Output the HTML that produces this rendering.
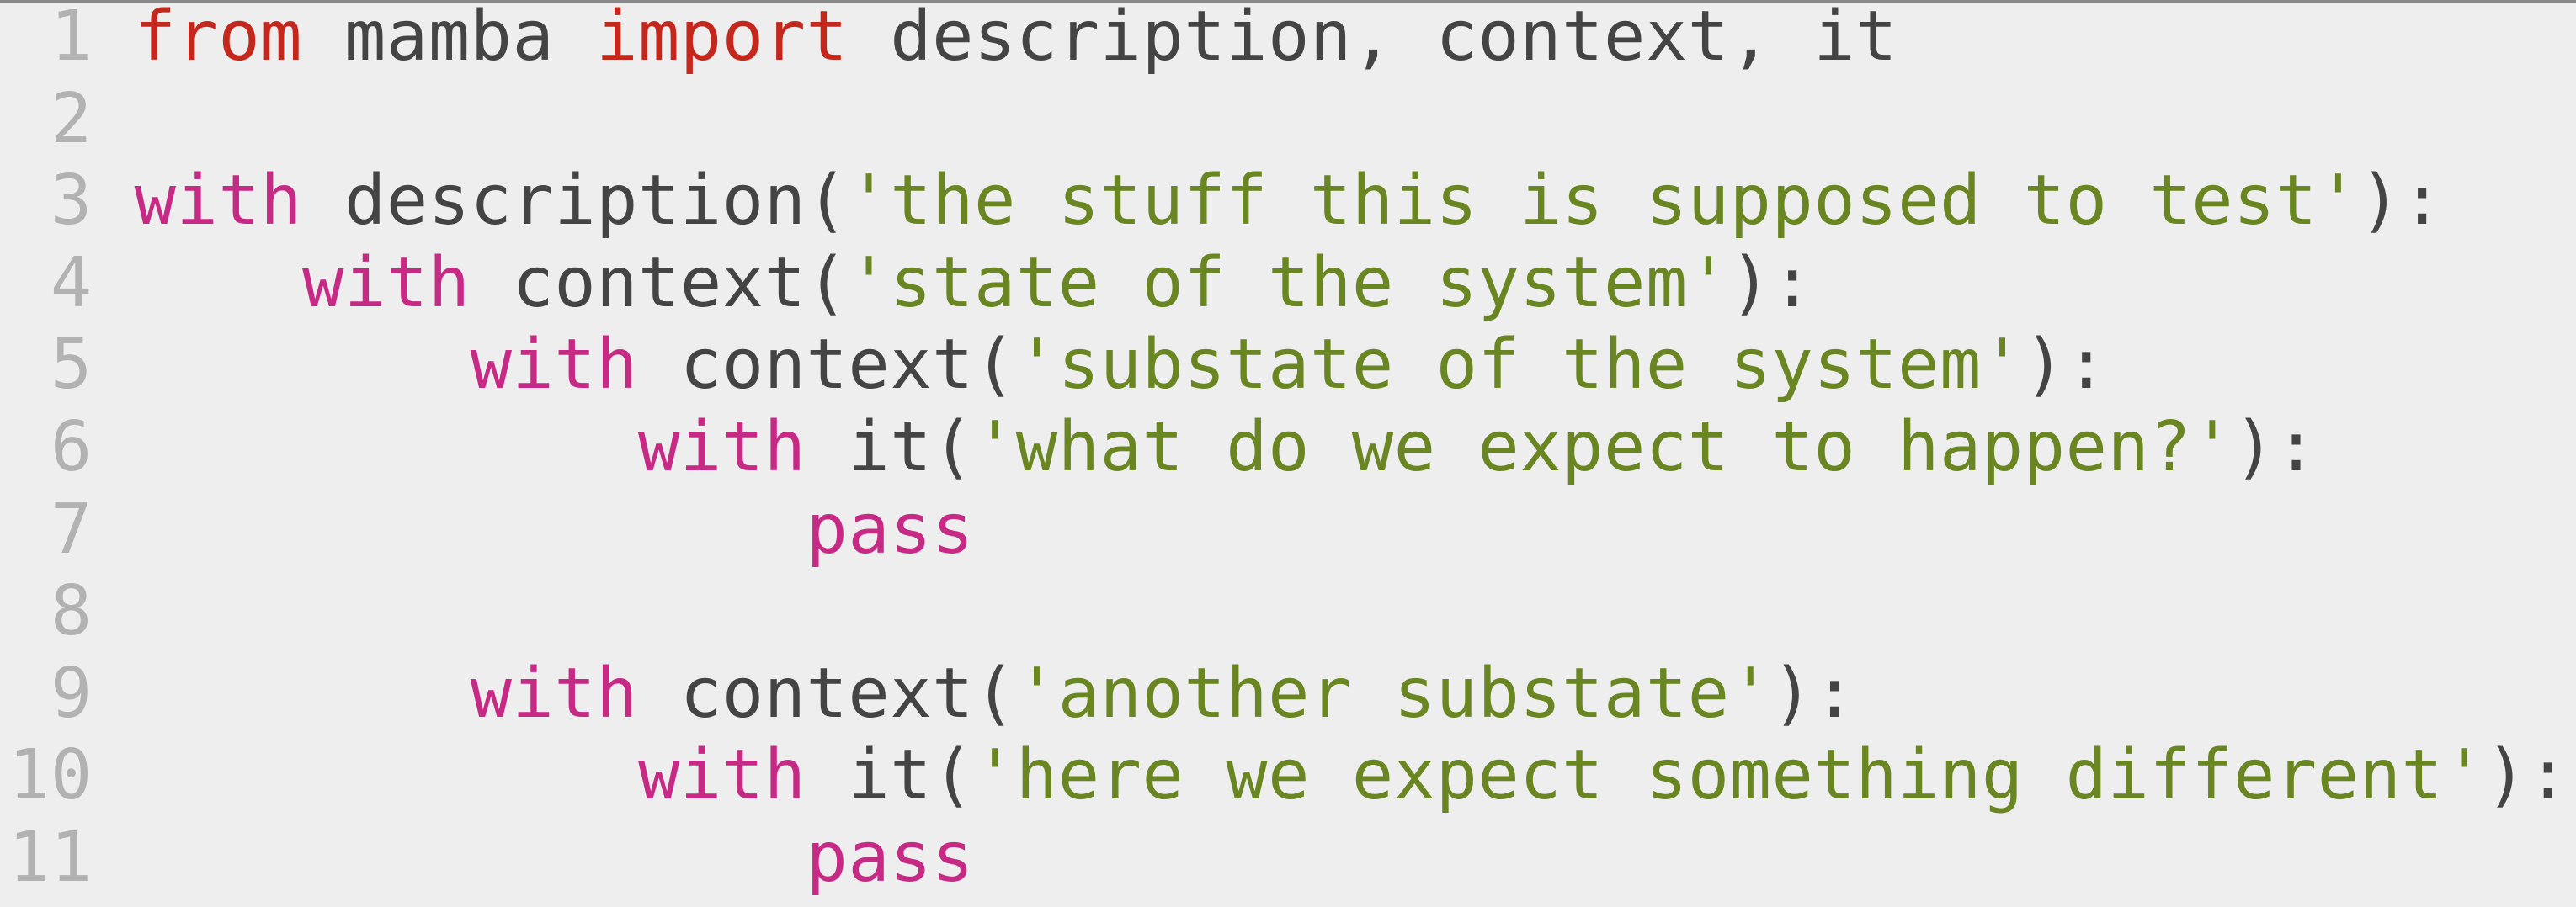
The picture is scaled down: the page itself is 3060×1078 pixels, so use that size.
<!DOCTYPE html>
<html><head><meta charset="utf-8"><style>
html,body{margin:0;padding:0;width:3060px;height:1078px;overflow:hidden;background:#eeeeee;}
.top{position:absolute;left:0;top:0;width:3060px;height:3px;background:#8a8a8a;}
pre{position:absolute;left:10px;top:-5px;margin:0;font-family:"DejaVu Sans Mono","Liberation Mono",monospace;font-size:82px;letter-spacing:0.5px;line-height:97.6px;color:#444444;white-space:pre;}
.n{color:#b2b2b2}
.r{color:#c4281c}
.k{color:#c62a85}
.s{color:#6a8622}
</style></head><body>
<div class="top"></div>
<pre><span class="n"> 1</span> <span class="r">from</span> mamba <span class="r">import</span> description, context, it
<span class="n"> 2</span>
<span class="n"> 3</span> <span class="k">with</span> description(<span class="s">'the stuff this is supposed to test'</span>):
<span class="n"> 4</span>     <span class="k">with</span> context(<span class="s">'state of the system'</span>):
<span class="n"> 5</span>         <span class="k">with</span> context(<span class="s">'substate of the system'</span>):
<span class="n"> 6</span>             <span class="k">with</span> it(<span class="s">'what do we expect to happen?'</span>):
<span class="n"> 7</span>                 <span class="k">pass</span>
<span class="n"> 8</span>
<span class="n"> 9</span>         <span class="k">with</span> context(<span class="s">'another substate'</span>):
<span class="n">10</span>             <span class="k">with</span> it(<span class="s">'here we expect something different'</span>):
<span class="n">11</span>                 <span class="k">pass</span></pre>
</body></html>
